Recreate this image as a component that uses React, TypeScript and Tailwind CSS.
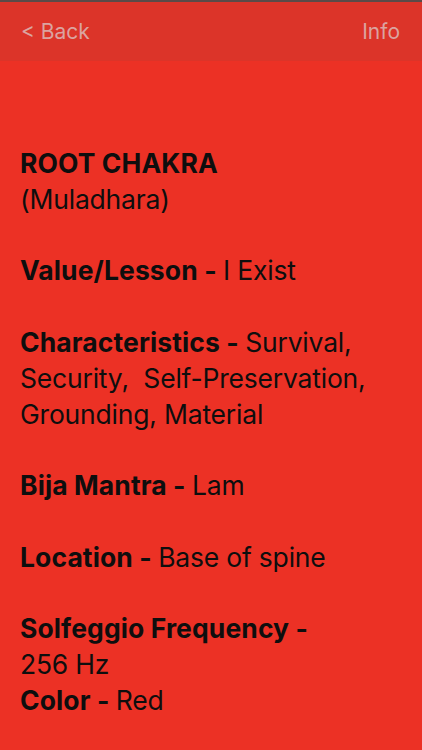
export default function App() {
  const rows: { b?: string; t?: string }[] = [
    { b: "ROOT CHAKRA" },
    { t: "(Muladhara)" },
    {},
    { b: "Value/Lesson - ", t: "I Exist" },
    {},
    { b: "Characteristics - ", t: "Survival," },
    { t: "Security,  Self-Preservation," },
    { t: "Grounding, Material" },
    {},
    { b: "Bija Mantra - ", t: "Lam" },
    {},
    { b: "Location - ", t: "Base of spine" },
    {},
    { b: "Solfeggio Frequency -" },
    { t: "256 Hz" },
    { b: "Color - ", t: "Red" },
  ];

  return (
    <div className="h-[750px] w-[422px] overflow-hidden bg-[#ec3125] font-['Inter',sans-serif]">
      <div className="h-[2px] bg-[#5a4a48]" />
      <div className="flex h-[59px] items-center justify-between bg-[#dc3429] pl-[21px] pr-[22px] text-[21px] text-[#dba3a0]">
        <span>&lt; Back</span>
        <span>Info</span>
      </div>
      <div className="px-[20px] pt-[85px] text-[26.5px] leading-[35.8px] text-[#0e0e0e]">
        {rows.map((r, i) => (
          <div key={i} className="h-[35.8px] whitespace-pre">
            {r.b && <span className="font-bold tracking-[0.1px]">{r.b}</span>}
            {r.t && <span className="tracking-[-0.2px]">{r.t}</span>}
          </div>
        ))}
      </div>
    </div>
  );
}
